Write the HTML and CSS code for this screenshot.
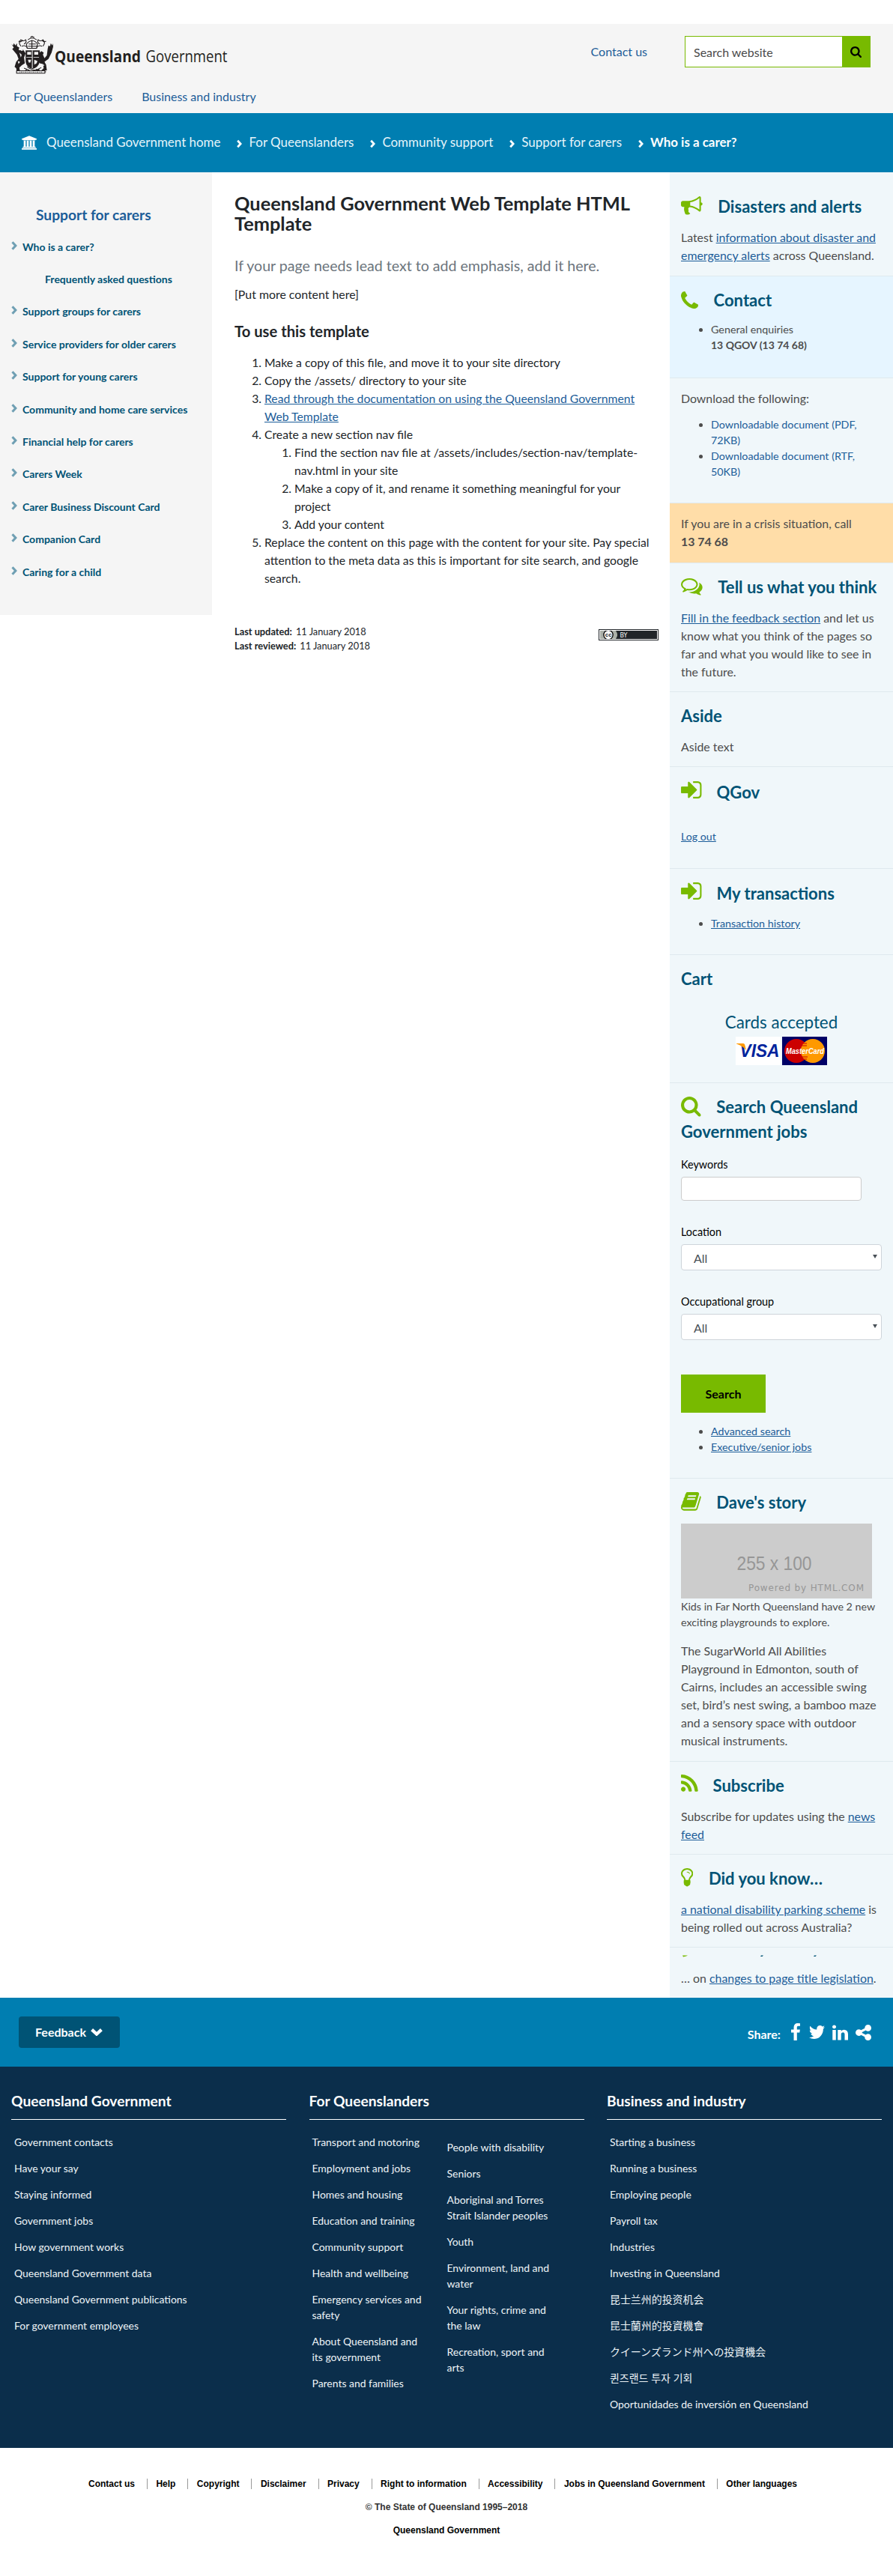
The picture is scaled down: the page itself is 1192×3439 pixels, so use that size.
FILE: index.html
```html
<!DOCTYPE html>
<html lang="en">
<head>
<meta charset="utf-8">
<title>Queensland Government Web Template HTML Template</title>
<link rel="stylesheet" href="styles.css">
</head>
<body>
<svg class="defs" width="0" height="0" aria-hidden="true">
  <symbol id="i-search" viewBox="64 128 1664 1664"><path d="M1216 832q0-185-131.5-316.5t-316.5-131.5-316.5 131.5-131.5 316.5 131.5 316.5 316.5 131.5 316.5-131.5 131.5-316.5zm512 832q0 52-38 90t-90 38q-54 0-90-38l-343-342q-179 124-399 124-143 0-273.5-55.5t-225-150-150-225-55.5-273.5 55.5-273.5 150-225 225-150 273.5-55.5 273.5 55.5 225 150 150 225 55.5 273.5q0 220-124 399l343 343q37 37 37 90z"/></symbol>
  <symbol id="i-signin" viewBox="128 256 1536 1280"><path d="M1312 896q0 26-19 45l-544 544q-19 19-45 19t-45-19-19-45v-288h-448q-26 0-45-19t-19-45v-384q0-26 19-45t45-19h448v-288q0-26 19-45t45-19 45 19l544 544q19 19 19 45zm352-352v704q0 119-84.5 203.5t-203.5 84.5h-320q-13 0-22.5-9.5t-9.5-22.5q0-4-1-20t-.5-26.5 3-23.5 10-19.5 20.5-6.5h320q66 0 113-47t47-113v-704q0-66-47-113t-113-47h-312l-11.5-1-11.5-3-8-5.5-7-9-2-13.5q0-4-1-20t-.5-26.5 3-23.5 10-19.5 20.5-6.5h320q119 0 203.5 84.5t84.5 203.5z"/></symbol>
  <symbol id="i-chev" viewBox="0 0 7 11"><path d="M1.2 1.2 5.2 5.5 1.2 9.8" fill="none" stroke="currentColor" stroke-width="2.8"/></symbol>
</svg>

<header class="header">
  <div class="brand">
    <svg class="logo" viewBox="0 0 330 54" width="330" height="54" role="img" aria-label="Queensland Government">
      <g transform="translate(-1.8 -.6) scale(1.05 .95)">
      <g fill="#231f20">
        <path d="M5 11l2 3 2-3v4l3 2-1 3 2 1 4-1 3 5-2 6 1 8-4 3-3 3 1 6 1 2H9l-1-7-2-2 2-7 3-4-2-6-3-4-3-4 2-2-3-5 2 2z"/>
        <path d="M40 22l3 2-1 3 2 5 3-4 1-9 1-5 2 1 1-4 2 3 1-3v5l-2 8-4 9-5 4 2 4 1 8h-7l3-3-1-6-4-1-4-6 2-7z"/>
        <path d="M20 21h18v16q-2 8-9 10-8-2-9-10z"/>
      </g>
      <g fill="none" stroke="#231f20" stroke-width="1.1">
        <path d="M14 15q-4-5 0-9 3 3 6 0 2 4-2 6m-3 3q5-2 7 2m20-2q4-5 0-9-3 3-6 0-2 4 2 6m3 3q-5-2-7 2M11 8q4 2 5-2M46 8q-4 2-5-2"/>
        <path d="M22 18l-1-6q3-4 7-5 5 1 7 5l-1 6zM23 6q5-5 11 0M26 3l2-2 3 2M24 12h9M23 15h11M28 7v11"/>
        <path d="M10 51q8 2 12-4M22 44q8 7 16 4M46 51q-8 1-13-4M18 46l7 3M40 45l-7 4"/>
      </g>
      <g fill="#f5f5f5">
        <path d="M22 23h5v4h-5zM31 23h5v4h-5zM21 30h7v1h-7zM30 30h7v1h-7zM23 34h4l-1 4h-2zM31 34l4 2-1 3-3 2zM12 24l3 3-1 4zM10 36l3 1-2 3zM15 19l2 2-3 1zM47 36l-2 3 3-1zM42 40l2 2-2 1zM28 21h1v25h-1z"/>
      </g>
      <path d="M8.500 49.500h36v3.500h-36z" fill="#f5f5f5" stroke="#231f20"/>
      <path d="M12 51.300h30" stroke="#555" stroke-dasharray="1 1 2 1"/>
      </g>
      <text class="logo-bold" x="58" y="34.500" textLength="115" lengthAdjust="spacingAndGlyphs">Queensland</text>
      <text class="logo-light" x="179.500" y="34.500" textLength="109" lengthAdjust="spacingAndGlyphs">Government</text>
    </svg>
    <a class="contact-link" href="#">Contact us</a>
    <form class="search"><span class="search-field">Search website</span><span class="search-go"><svg width="15" height="15"><use href="#i-search"/></svg></span></form>
  </div>
  <nav class="topnav"><a href="#">For Queenslanders</a><a href="#">Business and industry</a></nav>
</header>

<nav class="crumbs">
  <svg class="crumb-home" viewBox="0 0 1920 1792" width="20" height="19"><path d="M960 0l960 384v128h-128q0 26-20.500 45t-48.500 19h-1526q-28 0-48.500-19t-20.500-45h-128v-128zm-704 640h256v768h128v-768h256v768h128v-768h256v768h128v-768h256v768h59q28 0 48.500 19t20.500 45v64h-1664v-64q0-26 20.500-45t48.500-19h59v-768zm1595 960q28 0 48.500 19t20.500 45v128h-1920v-128q0-26 20.500-45t48.500-19h1782z"/></svg>
  <a href="#">Queensland Government home</a>
  <svg class="crumb-sep" width="7" height="12"><use href="#i-chev"/></svg><a href="#">For Queenslanders</a>
  <svg class="crumb-sep" width="7" height="12"><use href="#i-chev"/></svg><a href="#">Community support</a>
  <svg class="crumb-sep" width="7" height="12"><use href="#i-chev"/></svg><a href="#">Support for carers</a>
  <svg class="crumb-sep" width="7" height="12"><use href="#i-chev"/></svg><b>Who is a carer?</b>
</nav>

<div class="layout">
  <nav class="sidenav">
    <h2>Support for carers</h2>
    <ul>
      <li><svg width="8" height="12"><use href="#i-chev"/></svg><a href="#">Who is a carer?</a></li>
      <li class="sub"><a href="#">Frequently asked questions</a></li>
      <li><svg width="8" height="12"><use href="#i-chev"/></svg><a href="#">Support groups for carers</a></li>
      <li><svg width="8" height="12"><use href="#i-chev"/></svg><a href="#">Service providers for older carers</a></li>
      <li><svg width="8" height="12"><use href="#i-chev"/></svg><a href="#">Support for young carers</a></li>
      <li><svg width="8" height="12"><use href="#i-chev"/></svg><a href="#">Community and home care services</a></li>
      <li><svg width="8" height="12"><use href="#i-chev"/></svg><a href="#">Financial help for carers</a></li>
      <li><svg width="8" height="12"><use href="#i-chev"/></svg><a href="#">Carers Week</a></li>
      <li><svg width="8" height="12"><use href="#i-chev"/></svg><a href="#">Carer Business Discount Card</a></li>
      <li><svg width="8" height="12"><use href="#i-chev"/></svg><a href="#">Companion Card</a></li>
      <li><svg width="8" height="12"><use href="#i-chev"/></svg><a href="#">Caring for a child</a></li>
    </ul>
  </nav>

  <main class="content">
    <h1>Queensland Government Web Template HTML Template</h1>
    <p class="lead">If your page needs lead text to add emphasis, add it here.</p>
    <p>[Put more content here]</p>
    <h2>To use this template</h2>
    <ol>
      <li>Make a copy of this file, and move it to your site directory</li>
      <li>Copy the /assets/ directory to your site</li>
      <li><a href="#">Read through the documentation on using the Queensland Government Web Template</a></li>
      <li>Create a new section nav file
        <ol>
          <li>Find the section nav file at /assets/includes/section-nav/template-nav.html in your site</li>
          <li>Make a copy of it, and rename it something meaningful for your project</li>
          <li>Add your content</li>
        </ol>
      </li>
      <li>Replace the content on this page with the content for your site. Pay special attention to the meta data as this is important for site search, and google search.</li>
    </ol>
    <div class="meta">
      <dl>
        <div><dt>Last updated:</dt><dd>11 January 2018</dd></div>
        <div><dt>Last reviewed:</dt><dd>11 January 2018</dd></div>
      </dl>
      <svg class="cc" width="80" height="15" viewBox="0 0 80 15">
        <path d="M0 0h80v15H0z"/><path d="M1 1h78v13H1z" fill="#fff"/><path d="M2 2h76v11H2z"/><path d="M2 2h21q4 5.500 0 11H2z" fill="#abb0a8"/>
        <circle cx="13" cy="7.500" r="7" fill="#fff"/><circle cx="13" cy="7.500" r="6.200" fill="none" stroke="#000" stroke-width="1.400"/><path d="M8 1h10v1H8zM8 13h10v1H8z" fill="#fff"/><path d="M8 0h10v1H8zM8 14h10v1H8z"/>
        <text class="cc-c" x="8.700" y="10">cc</text><text class="cc-by" x="28.500" y="10.500">BY</text>
      </svg>
    </div>
  </main>

  <aside class="aside">
    <section class="s-alerts">
      <h2><svg width="28.700" height="24.600" viewBox="0 128 1792 1536"><path d="M1664 640q53 0 90.500 37.500t37.500 90.500-37.500 90.500-90.500 37.500v384q0 52-38 90t-90 38q-417-347-812-380-58 19-91 66t-31 100.500 40 92.500q-20 33-23 65.500t6 58 33.500 55 48 50 61.500 50.500q-29 58-111.500 83t-168.500 11.500-132-55.500q-7-23-29.500-87.500t-32-94.500-23-89-15-101 3.500-98.500 22-110.500h-122q-66 0-113-47t-47-113v-192q0-66 47-113t113-47h480q435 0 896-384 52 0 90 38t38 90v384zm-128 604v-954q-394 302-768 343v270q377 42 768 341z"/></svg>Disasters and alerts</h2>
      <p>Latest <a href="#">information about disaster and emergency alerts</a> across Queensland.</p>
    </section>
    <section class="s-contact">
      <h2><svg width="23" height="23" viewBox="192 128 1408 1408"><path d="M1600 1240q0 27-10 70.500t-21 68.500q-21 50-122 106-94 51-186 51-27 0-53-3.500t-57.500-12.500-47-14.500-55.500-20.500-49-18q-98-35-175-83-127-79-264-216t-216-264q-48-77-83-175-3-9-18-49t-20.500-55.500-14.500-47-12.500-57.500-3.500-53q0-92 51-186 56-101 106-122 25-11 68.500-21t70.500-10q14 0 21 3 18 6 53 76 11 19 30 54t35 63.500 31 53.500q3 4 17.500 25t21.500 35.500 7 28.500q0 20-28.500 50t-62 55-62 53-28.500 46q0 9 5 22.500t8.500 20.500 14 24 11.500 19q76 137 174 235t235 174q2 1 19 11.500t24 14 20.500 8.500 22.500 5q18 0 46-28.500t53-62 55-62 50-28.500q14 0 28.500 7t35.500 21.500 25 17.500q25 15 53.500 31t63.500 35 54 30q70 35 76 53 3 7 3 21z"/></svg>Contact</h2>
      <ul><li>General enquiries<br><b>13 QGOV (13 74 68)</b></li></ul>
    </section>
    <section class="s-download">
      <p>Download the following:</p>
      <ul class="plain"><li><a href="#">Downloadable document (PDF, 72KB)</a></li><li><a href="#">Downloadable document (RTF, 50KB)</a></li></ul>
    </section>
    <section class="s-crisis">
      <p>If you are in a crisis situation, call<br><b>13 74 68</b></p>
    </section>
    <section class="s-tell">
      <h2><svg width="28.700" height="23" viewBox="0 256 1792 1440"><path d="M704 384q-153 0-286 52t-211.500 141-78.500 191q0 82 53 158t149 132l97 56-35 84q34-20 62-39l44-31 53 10q78 14 153 14 153 0 286-52t211.500-141 78.500-191-78.500-191-211.500-141-286-52zm0-128q191 0 353.500 68.500t256.500 186.500 94 257-94 257-256.500 186.500-353.500 68.500q-86 0-176-16-124 88-278 128-36 9-86 16h-3q-11 0-20.500-8t-11.500-21q-1-3-1-6.500t.5-6.500 2-6l2.500-5 3.500-5.500 4-5 4.500-5 4-4.500q5-6 23-25t26-29.500 22.500-29 25-38.500 20.500-44q-124-72-195-177t-71-224q0-139 94-257t256.500-186.500 353.500-68.500zm822 1169q10 24 20.500 44t25 38.500 22.500 29 26 29.500 23 25q1 1 4 4.500t4.500 5 4 5 3.500 5.500l2.500 5 2 6 .5 6.500-1 6.500q-3 14-13 22t-22 7q-50-7-86-16-154-40-278-128-90 16-176 16-271 0-472-132 58 4 88 4 161 0 309-45t264-129q125-92 192-212t67-254q0-77-23-152 129 71 204 178t75 230q0 120-71 224.500t-195 176.500z"/></svg>Tell us what you think</h2>
      <p><a href="#">Fill in the feedback section</a> and let us know what you think of the pages so far and what you would like to see in the future.</p>
    </section>
    <section class="s-aside">
      <h2>Aside</h2>
      <p>Aside text</p>
    </section>
    <section class="s-qgov">
      <h2><svg class="on-base" width="27.700" height="23"><use href="#i-signin"/></svg>QGov</h2>
      <a class="logout" href="#">Log out</a>
    </section>
    <section class="s-trans">
      <h2><svg class="on-base" width="27.700" height="23"><use href="#i-signin"/></svg>My transactions</h2>
      <ul><li><a href="#">Transaction history</a></li></ul>
    </section>
    <section class="s-cart">
      <h2>Cart</h2>
      <h3>Cards accepted</h3>
      <div class="cards">
        <svg width="60" height="38" viewBox="0 0 60 38"><path d="M0 0h60v38H0z" fill="#fff"/><text class="visa" x="5.500" y="27" textLength="53" lengthAdjust="spacingAndGlyphs">VISA</text><path d="M1 9h9q2 0 2.500 3l1.500 6Q9 12 1 9.500z" fill="#f90"/></svg>
        <svg width="60" height="38" viewBox="0 0 60 38"><path d="M0 0h60v38H0z" fill="#006"/><circle cx="19" cy="19" r="16" fill="#c00"/><circle cx="41" cy="19" r="16" fill="#f90"/><path d="M27 9h6M26 12h7M25 27h9M26 30h7" stroke="#c00" stroke-width="1.200"/><text class="mc" x="5" y="23" textLength="51" lengthAdjust="spacingAndGlyphs">MasterCard</text></svg>
      </div>
    </section>
    <section class="s-jobs">
      <h2><svg class="deep" width="26.700" height="26.700"><use href="#i-search"/></svg>Search Queensland Government jobs</h2>
      <form>
        <label>Keywords</label><div class="input"></div>
        <label>Location</label><div class="select"><span>All</span><i></i></div>
        <label>Occupational group</label><div class="select"><span>All</span><i></i></div>
        <button type="button">Search</button>
      </form>
      <ul><li><a href="#">Advanced search</a></li><li><a href="#">Executive/senior jobs</a></li></ul>
    </section>
    <section class="s-dave">
      <h2><svg width="26.700" height="24.700" viewBox="64 128 1664 1536"><path d="M1703 478q40 57 18 129l-275 906q-19 64-76.500 107.500t-122.500 43.500h-923q-77 0-148.500-53.500t-99.500-131.500q-24-67-2-127 0-4 3-27t4-37q1-8-3-21.500t-3-19.500q2-11 8-21t16.500-23.500 16.500-23.500q23-38 45-91.500t30-91.500q3-10 .5-30t-.5-28q3-11 17-28t17-23q21-36 42-92t25-90q1-9-2.500-32t.5-28q4-13 22-30.500t22-22.500q19-26 42.500-84.500t27.500-96.500q1-8-3-25.500t-2-26.500q2-8 9-18t18-23 17-21q8-12 16.500-30.500t15-35 16-36 19.500-32 26.500-23.500 36-11.500 47.500 5.500l-1 3q38-9 51-9h761q74 0 114 56t18 130l-274 906q-36 119-71.500 153.500t-128.500 34.500h-869q-27 0-38 15-11 16-1 43 24 70 144 70h923q29 0 56-15.500t35-41.500l300-987q7-22 5-57 38 15 59 43zm-1064 2q-4 13 2 22.500t20 9.500h608q13 0 25.500-9.500t16.500-22.500l21-64q4-13-2-22.500t-20-9.500h-608q-13 0-25.500 9.500t-16.500 22.500zm-83 256q-4 13 2 22.500t20 9.500h608q13 0 25.500-9.500t16.500-22.500l21-64q4-13-2-22.500t-20-9.500h-608q-13 0-25.500 9.500t-16.500 22.500z"/></svg>Dave's story</h2>
      <svg class="photo" width="255" height="100" viewBox="0 0 255 100"><path d="M0 0h255v100H0z" fill="#ccc"/><text class="ph-size" x="74.500" y="62" textLength="100" lengthAdjust="spacingAndGlyphs">255 x 100</text><text class="ph-by" x="90" y="90" textLength="154">Powered by HTML.COM</text></svg>
      <p class="caption">Kids in Far North Queensland have 2 new exciting playgrounds to explore.</p>
      <p>The SugarWorld All Abilities Playground in Edmonton, south of Cairns, includes an accessible swing set, bird’s nest swing, a bamboo maze and a sensory space with outdoor musical instruments.</p>
    </section>
    <section class="s-sub">
      <h2><svg class="on-base" width="22.700" height="22.700" viewBox="192 128 1408 1408"><path d="M576 1344q0 80-56 136t-136 56-136-56-56-136 56-136 136-56 136 56 56 136zm512 123q2 28-17 48-18 21-47 21h-135q-25 0-43-16.500t-20-41.500q-22-229-184.500-391.500t-391.500-184.500q-25-2-41.500-20t-16.500-43v-135q0-29 21-47 17-17 43-17h5q160 13 306 80.500t259 181.500q114 113 181.500 259t80.500 306zm512 2q2 27-18 47-18 20-46 20h-143q-26 0-44.500-17.500t-19.500-42.500q-12-215-101-408.500t-231.500-336-336-231.500-408.500-102q-25-1-42.500-19.500t-17.500-43.500v-143q0-28 20-46 18-18 44-18h3q262 13 501.500 120t425.500 294q187 186 294 425.500t120 501.500z"/></svg>Subscribe</h2>
      <p>Subscribe for updates using the <a href="#">news feed</a></p>
    </section>
    <section class="s-know">
      <h2><svg width="16.300" height="24.600" viewBox="384 128 1024 1536"><path d="M1120 576q0 13-9.500 22.500t-22.500 9.500-22.500-9.500-9.500-22.500q0-46-54-71t-106-25q-13 0-22.500-9.500t-9.500-22.500 9.500-22.500 22.500-9.500q50 0 99.500 16t87 54 37.500 90zm160 0q0-72-34.500-134t-90-101.500-123-62-136.500-22.500-136.500 22.500-123 62-90 101.500-34.500 134q0 101 68 180 10 11 30.500 33t30.500 33q128 153 141 298h228q13-145 141-298 10-11 30.500-33t30.500-33q68-79 68-180zm128 0q0 155-103 268-45 49-74.500 87t-59.500 95.500-34 107.500q47 28 47 82 0 37-25 64 25 27 25 64 0 52-45 81 13 23 13 47 0 46-31.500 71t-77.500 25q-20 44-60 70t-87 26-87-26-60-70q-46 0-77.500-25t-31.500-71q0-24 13-47-45-29-45-81 0-37 25-64-25-27-25-64 0-54 47-82-4-50-34-107.500t-59.500-95.500-74.500-87q-103-113-103-268 0-99 44.500-184.500t117-142 164-89 186.500-32.500 186.500 32.500 164 89 117 142 44.500 184.500z"/><path d="M768 1130h256v380h-256z"/></svg>Did you know…</h2>
      <p><a href="#">a national disability parking scheme</a> is being rolled out across Australia?</p>
    </section>
    <section class="s-last">
      <svg width="268" height="3" viewBox="0 0 268 3"><path d="M2 .5h7L7 1.500 3 2.500z" fill="#78ba00"/><path d="M107 .5h3l-1.500 1.500H106zM178 .5h3l-1.500 1.500H177z" fill="#005375"/></svg>
      <p>… on <a href="#">changes to page title legislation</a>.</p>
    </section>
  </aside>
</div>

<div class="sharebar">
  <a class="feedback" href="#">Feedback<svg width="16" height="10" viewBox="0 0 16 10"><path d="M1.600 1.600 8 7.600l6.400-6" fill="none" stroke="#fff" stroke-width="4.200"/></svg></a>
  <div class="share"><b>Share:</b>
    <svg width="12" height="23" viewBox="479 0 864 1664" preserveAspectRatio="none"><path d="M1343 12v264h-157q-86 0-116 36t-30 108v189h293l-39 296h-254v759h-306v-759h-255v-296h255v-218q0-186 104-288.500t277-102.500q147 0 228 12z"/></svg>
    <svg class="tw" width="21" height="18" viewBox="108 256 1576 1280" preserveAspectRatio="none"><path d="M1684 408q-67 98-162 167 1 14 1 42 0 130-38 259.500t-115.500 248.500-184.500 210.500-258 146-323 54.500q-271 0-496-145 35 4 78 4 225 0 401-138-105-2-188-64.500t-114-159.500q33 5 61 5 43 0 85-11-112-23-185.500-111.500t-73.500-205.500v-4q68 38 146 41-66-44-105-115t-39-154q0-88 44-163 121 149 294.500 238.500t371.500 99.500q-8-38-8-74 0-134 94.500-228.500t228.500-94.500q140 0 236 102 109-21 205-78-37 115-142 178 93-10 186-50z"/></svg>
    <svg class="li" width="21" height="21" viewBox="128 148 1536 1468"><path d="M477 625v991h-330v-991h330zm21-306q1 73-50.500 122t-135.500 49h-2q-82 0-132-49t-50-122q0-74 51.500-122.500t134.500-48.500 133 48.500 51 122.500zm1166 729v568h-329v-530q0-105-40.500-164.500t-126.500-59.500q-63 0-105.500 34.500t-63.500 85.500q-11 30-11 81v553h-329q2-399 2-647t-1-296l-1-48h329v144h-2q20-32 41-56t56.500-52 87-43.500 114.500-15.500q171 0 275 113.500t104 332.500z"/></svg>
    <svg class="sh" width="21" height="21" viewBox="128 128 1536 1536"><path d="M1344 1024q133 0 226.500 93.500t93.500 226.500-93.500 226.500-226.500 93.500-226.500-93.500-93.500-226.500q0-12 2-34l-360-180q-92 86-218 86-133 0-226.500-93.500t-93.500-226.500 93.500-226.500 226.500-93.500q126 0 218 86l360-180q-2-22-2-34 0-133 93.500-226.500t226.500-93.500 226.500 93.500 93.500 226.500-93.500 226.500-226.500 93.500q-126 0-218-86l-360 180q2 22 2 34t-2 34l360 180q92-86 218-86z"/></svg>
  </div>
</div>

<footer class="footer">
  <section>
    <h3>Queensland Government</h3>
    <ul>
      <li>Government contacts</li><li>Have your say</li><li>Staying informed</li><li>Government jobs</li><li>How government works</li><li>Queensland Government data</li><li>Queensland Government publications</li><li>For government employees</li>
    </ul>
  </section>
  <section>
    <h3>For Queenslanders</h3>
    <div class="two">
      <ul>
        <li>Transport and motoring</li><li>Employment and jobs</li><li>Homes and housing</li><li>Education and training</li><li>Community support</li><li>Health and wellbeing</li><li>Emergency services and safety</li><li>About Queensland and its government</li><li>Parents and families</li>
      </ul>
      <ul class="second">
        <li>People with disability</li><li>Seniors</li><li>Aboriginal and Torres Strait Islander peoples</li><li>Youth</li><li>Environment, land and water</li><li>Your rights, crime and the law</li><li>Recreation, sport and arts</li>
      </ul>
    </div>
  </section>
  <section>
    <h3>Business and industry</h3>
    <ul>
      <li>Starting a business</li><li>Running a business</li><li>Employing people</li><li>Payroll tax</li><li>Industries</li><li>Investing in Queensland</li><li lang="zh-Hans">昆士兰州的投资机会</li><li lang="zh-Hant">昆士蘭州的投資機會</li><li lang="ja">クイーンズランド州への投資機会</li><li lang="ko">퀸즈랜드 투자 기회</li><li>Oportunidades de inversión en Queensland</li>
    </ul>
  </section>
</footer>

<div class="legal">
  <ul><li>Contact us</li><li>Help</li><li>Copyright</li><li>Disclaimer</li><li>Privacy</li><li>Right to information</li><li>Accessibility</li><li>Jobs in Queensland Government</li><li>Other languages</li></ul>
  <p class="copy">© The State of Queensland 1995–2018</p>
  <p>Queensland Government</p>
</div>
</body>
</html>
```
FILE: styles.css
```css
* { box-sizing: border-box; }
body { margin: 0; padding-top: 32px; background: #fff; color: #212529; font: 16px/24px Lato, "Noto Sans CJK SC", sans-serif; }
h1, h2, h3, p, ul, ol, dl, dd { margin: 0; padding: 0; }
ul { list-style: none; }
a { color: #1c5d99; text-decoration: none; }
svg { flex: none; fill: currentColor; }
.defs { position: absolute; }

/* header */
.header { height: 119px; background: #f5f5f5; }
.brand { display: flex; height: 79px; padding: 16px 30px 0 15px; }
.logo { display: block; }
.logo-bold, .logo-light { font-family: "Open Sans", sans-serif; font-size: 22px; fill: #231f20; }
.logo-bold { font-weight: 700; }
.contact-link { margin-left: auto; padding-top: 9px; }
.search { display: flex; width: 248px; height: 42px; margin-left: 50px; border: 1px solid #78ba00; background: #fff; }
.search-field { flex: 1; padding: 9px 12px 9px 11px; color: #4a4a4a; }
.search-go { display: flex; align-items: center; justify-content: center; width: 37px; background: #78ba00; color: #000; }
.topnav { display: flex; gap: 39px; padding: 6px 18px; }

/* breadcrumb */
.crumbs { display: flex; align-items: center; height: 79px; padding: 0 29px 1px; background: #007eb1; color: #fff; font-size: 16.95px; }
.crumbs a { color: #e6f4fa; }
.crumb-home { margin-right: 13px; }
.crumb-sep { margin: 3px 9px 0 22px; }

/* three-column layout */
.layout { display: grid; grid-template-columns: 283px 611px 298px; align-items: start; height: 2437px; }
.sidenav { height: 591px; background: #f5f5f5; color: #005375; font-weight: 700; }
.sidenav h2 { padding: 43px 0 0 48px; color: #1c5d99; font-size: 19.2px; line-height: 27px; }
.sidenav ul { padding: 8px 0 0 15px; font-size: 14px; }
.sidenav li { display: flex; align-items: center; height: 43.4px; }
.sidenav a { color: #005375; }
.sidenav svg { margin: -4px 7px 0 0; color: #6f9fb3; }
.sidenav .sub { padding-left: 45px; }

.content { padding: 28px 15px 0 30px; font-size: 15.87px; }
.content h1 { width: 560px; font-size: 25.36px; line-height: 27px; }
.lead { margin-top: 28px; color: #6c757d; font-size: 19.6px; line-height: 29px; }
.lead + p { margin-top: 12px; }
.content h2 { margin-top: 23.5px; font-size: 20.2px; line-height: 27px; }
.content ol { padding-left: 40px; }
.content h2 + ol { margin-top: 16.5px; width: 564px; font-size: 15.74px; }
.content a, .aside a { text-decoration: underline; }
.meta { display: flex; justify-content: space-between; margin-top: 50px; font-size: 12.8px; line-height: 19px; }
.meta div { display: flex; gap: 5px; }
.meta dt { font-weight: 700; }
.cc { margin-top: 6px; }
.cc-c { font: 700 8px "Liberation Sans", sans-serif; }
.cc-by { font: 8px "DejaVu Sans", sans-serif; fill: #fff; }

/* right column */
.aside { color: #4c4c4c; font-size: 15.9px; }
.aside section { padding: 15px 15px 0; border-bottom: 1px solid #dfe9ee; background: #f0f7fa; }
.aside h2 { color: #005375; font-size: 22.05px; line-height: 33px; }
.aside h2 + p { margin-top: 12.5px; }
.aside h2 + ul { margin-top: 13px; }
.aside h2 svg { margin: -10px 20.6px 0 0; color: #78ba00; vertical-align: -3px; }
.aside h2 .on-base { margin-right: 19.8px; vertical-align: 0; }
.aside h2 .deep { vertical-align: -5px; }
.aside ul { padding-left: 40px; font-size: 14.3px; line-height: 21px; list-style: disc; }
.aside .plain a { text-decoration: none; }
.s-alerts { height: 139px; }
.aside .s-alerts { padding-top: 29px; }
.s-contact { height: 136px; }
.s-contact b { font-size: 14px; }
.aside .s-contact { background: #e6f5ff; }
.aside .s-contact ul { margin-top: 12px; }
.s-download { height: 167px; }
.s-download ul { margin-top: 12px; }
.s-crisis { height: 80px; }
.aside .s-crisis { background: #ffdda8; }
.s-tell { height: 172px; }
.s-aside { height: 100px; }
.s-qgov { height: 136px; }
.aside .s-qgov { padding-top: 17px; }
.logout { display: block; margin-top: 32px; font-size: 14.2px; line-height: 21px; }
.aside .s-trans { height: 115px; padding-top: 16px; }
.s-cart { height: 171px; }
.s-cart h3 { margin-top: 25px; color: #005375; font-size: 22.4px; font-weight: 400; line-height: 33px; text-align: center; }
.cards { display: flex; justify-content: center; gap: 2px; margin-top: 3px; }
.visa { font: italic 700 23px "Liberation Sans", sans-serif; fill: #00239c; }
.mc { font: italic 700 11px "Liberation Sans", sans-serif; fill: #fff; }
.s-jobs { height: 528px; }
.s-jobs form { margin-top: 17px; font-size: 14.4px; line-height: 21px; color: #000; }
.s-jobs label { display: block; }
.input { width: 241px; height: 32px; margin: 6px 0 31px; border: 1px solid #ccc; border-radius: 4px; background: #fff; }
.select { display: flex; align-items: center; justify-content: space-between; width: 268px; height: 35px; margin: 6px 0 31px; padding: 2px 5px 0 16px; border: 1px solid #ced4da; border-radius: 4px; background: #fff; color: #495057; font-size: 16px; }
.select i { margin-top: -4px; border: solid transparent; border-width: 5.5px 3px 0; border-top-color: #495057; }
.s-jobs button { display: block; width: 113px; height: 51px; margin: 46px 0 14px; border: 0; background: #78ba00; color: #000; font: 700 16px Lato, sans-serif; }
.s-dave { height: 378px; }
.photo { display: block; margin-top: 12px; }
.ph-size { font: 26px "Liberation Sans", sans-serif; fill: #969696; }
.ph-by { font: 12px "DejaVu Sans", sans-serif; fill: #969696; }
.caption { margin-bottom: 16px; font-size: 14.25px; line-height: 21px; }
.s-sub, .s-know { height: 124px; }
.aside .s-last { height: 67px; padding-top: 10px; border: 0; }
.s-last svg { display: block; margin-bottom: 15.5px; }

/* share bar */
.sharebar { display: flex; justify-content: space-between; height: 92px; padding: 25px 29px 0 25px; background: #007eb1; color: #fff; }
.feedback { display: flex; align-items: center; gap: 6px; width: 135px; height: 42px; padding: 0 0 0 22px; border-radius: 4px; background: #005375; color: #fff; font-weight: 700; }
.share { display: flex; height: 40px; }
.share b { margin: 12px 14px 0 0; }
.share svg { margin-top: 9px; margin-right: 12px; }
.share .tw { margin: 12px 10px 0 0; }
.share .li { margin: 11px 10px 0 0; }
.share .sh { margin: 11px 0 0; }

/* footer */
.footer { display: grid; grid-template-columns: 367px 367px 367px; justify-content: space-between; height: 509px; padding: 32px 15px 0; background: #0b2e4b; color: #eef4f7; font-size: 13.95px; line-height: 21px; }
.footer h3 { height: 39px; border-bottom: 1px solid #fff; color: #fff; font-size: 19.2px; line-height: 27px; }
.footer ul { padding: 19px 4px 0; }
.footer li { margin-bottom: 14px; }
.two { display: grid; grid-template-columns: 180px 180px; }
.two li { max-width: 149px; }
.two .second { padding-top: 26px; }
[lang="zh-Hant"] { font-family: "Noto Sans CJK TC", sans-serif; }
[lang="ja"] { font-family: "Noto Sans CJK JP", sans-serif; }
[lang="ko"] { font-family: "Noto Sans CJK KR", sans-serif; }

.legal { height: 171px; padding-top: 41px; color: #000; font: 700 12px/14px "Liberation Sans", sans-serif; text-align: center; }
.legal ul { display: flex; padding-left: 118px; }
.legal li + li { margin-left: 16px; padding-left: 11.4px; border-left: 1px solid #999; }
.legal p { margin-top: 17px; }
.legal .copy { color: #333; }
```
